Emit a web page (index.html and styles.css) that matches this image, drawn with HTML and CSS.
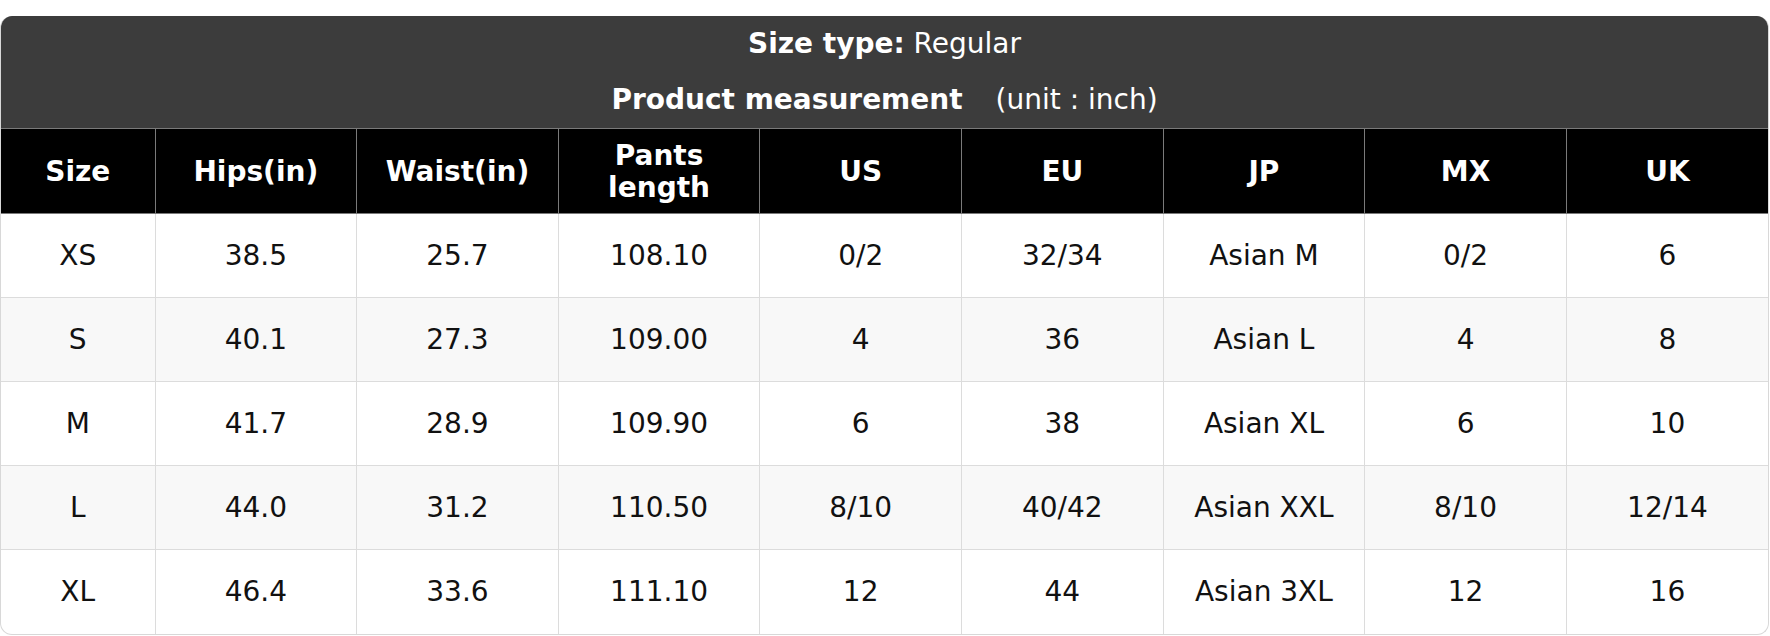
FILE: index.html
```html
<!DOCTYPE html>
<html>
<head>
<meta charset="utf-8">
<link rel="stylesheet" href="styles.css">
</head>
<body>
<div class="wrap">
  <div class="caption">
    <div class="cap-line"><b>Size type:</b> Regular</div>
    <div class="cap-line"><b>Product measurement</b><span class="unit">(unit : inch)</span></div>
  </div>
  <table class="size-table">
    <colgroup>
      <col class="c-first">
      <col><col><col><col><col><col><col><col>
    </colgroup>
    <thead>
      <tr>
        <th>Size</th><th>Hips(in)</th><th>Waist(in)</th><th>Pants<br>length</th><th>US</th><th>EU</th><th>JP</th><th>MX</th><th>UK</th>
      </tr>
    </thead>
    <tbody>
      <tr><td>XS</td><td>38.5</td><td>25.7</td><td>108.10</td><td>0/2</td><td>32/34</td><td>Asian M</td><td>0/2</td><td>6</td></tr>
      <tr><td>S</td><td>40.1</td><td>27.3</td><td>109.00</td><td>4</td><td>36</td><td>Asian L</td><td>4</td><td>8</td></tr>
      <tr><td>M</td><td>41.7</td><td>28.9</td><td>109.90</td><td>6</td><td>38</td><td>Asian XL</td><td>6</td><td>10</td></tr>
      <tr><td>L</td><td>44.0</td><td>31.2</td><td>110.50</td><td>8/10</td><td>40/42</td><td>Asian XXL</td><td>8/10</td><td>12/14</td></tr>
      <tr><td>XL</td><td>46.4</td><td>33.6</td><td>111.10</td><td>12</td><td>44</td><td>Asian 3XL</td><td>12</td><td>16</td></tr>
    </tbody>
  </table>
</div>
</body>
</html>
```

FILE: styles.css
```css
html, body {
  margin: 0;
  padding: 0;
  background: #fff;
}
body {
  font-family: "DejaVu Sans", sans-serif;
  font-size: 28px;
  color: #111;
}
.wrap {
  box-sizing: border-box;
  width: 1769px;
  margin-top: 16px;
  border: 1px solid #d8d8d8;
  border-top: none;
  border-radius: 12px;
  overflow: hidden;
}
.caption {
  background: #3c3c3c;
  color: #fff;
  text-align: center;
  height: 112px;
}
.cap-line {
  line-height: 56px;
  height: 56px;
}
.unit {
  margin-left: 33px;
}
.size-table {
  width: 100%;
  border-collapse: collapse;
  table-layout: fixed;
}
.c-first {
  width: 154px;
}
.size-table th {
  background: #000;
  color: #fff;
  font-weight: bold;
  height: 85px;
  padding: 2px 0 0;
  line-height: 1.15;
  border: 1px solid #7a7a7a;
  box-sizing: border-box;
}
.size-table td {
  text-align: center;
  height: 84px;
  padding: 0;
  border: 1px solid #dcdcdc;
  box-sizing: border-box;
}
.size-table tbody tr:nth-child(even) td {
  background: #f8f8f8;
}
.size-table th:first-child, .size-table td:first-child {
  border-left: none;
}
.size-table th:last-child, .size-table td:last-child {
  border-right: none;
}
.size-table tbody tr:last-child td {
  border-bottom: none;
}
```
